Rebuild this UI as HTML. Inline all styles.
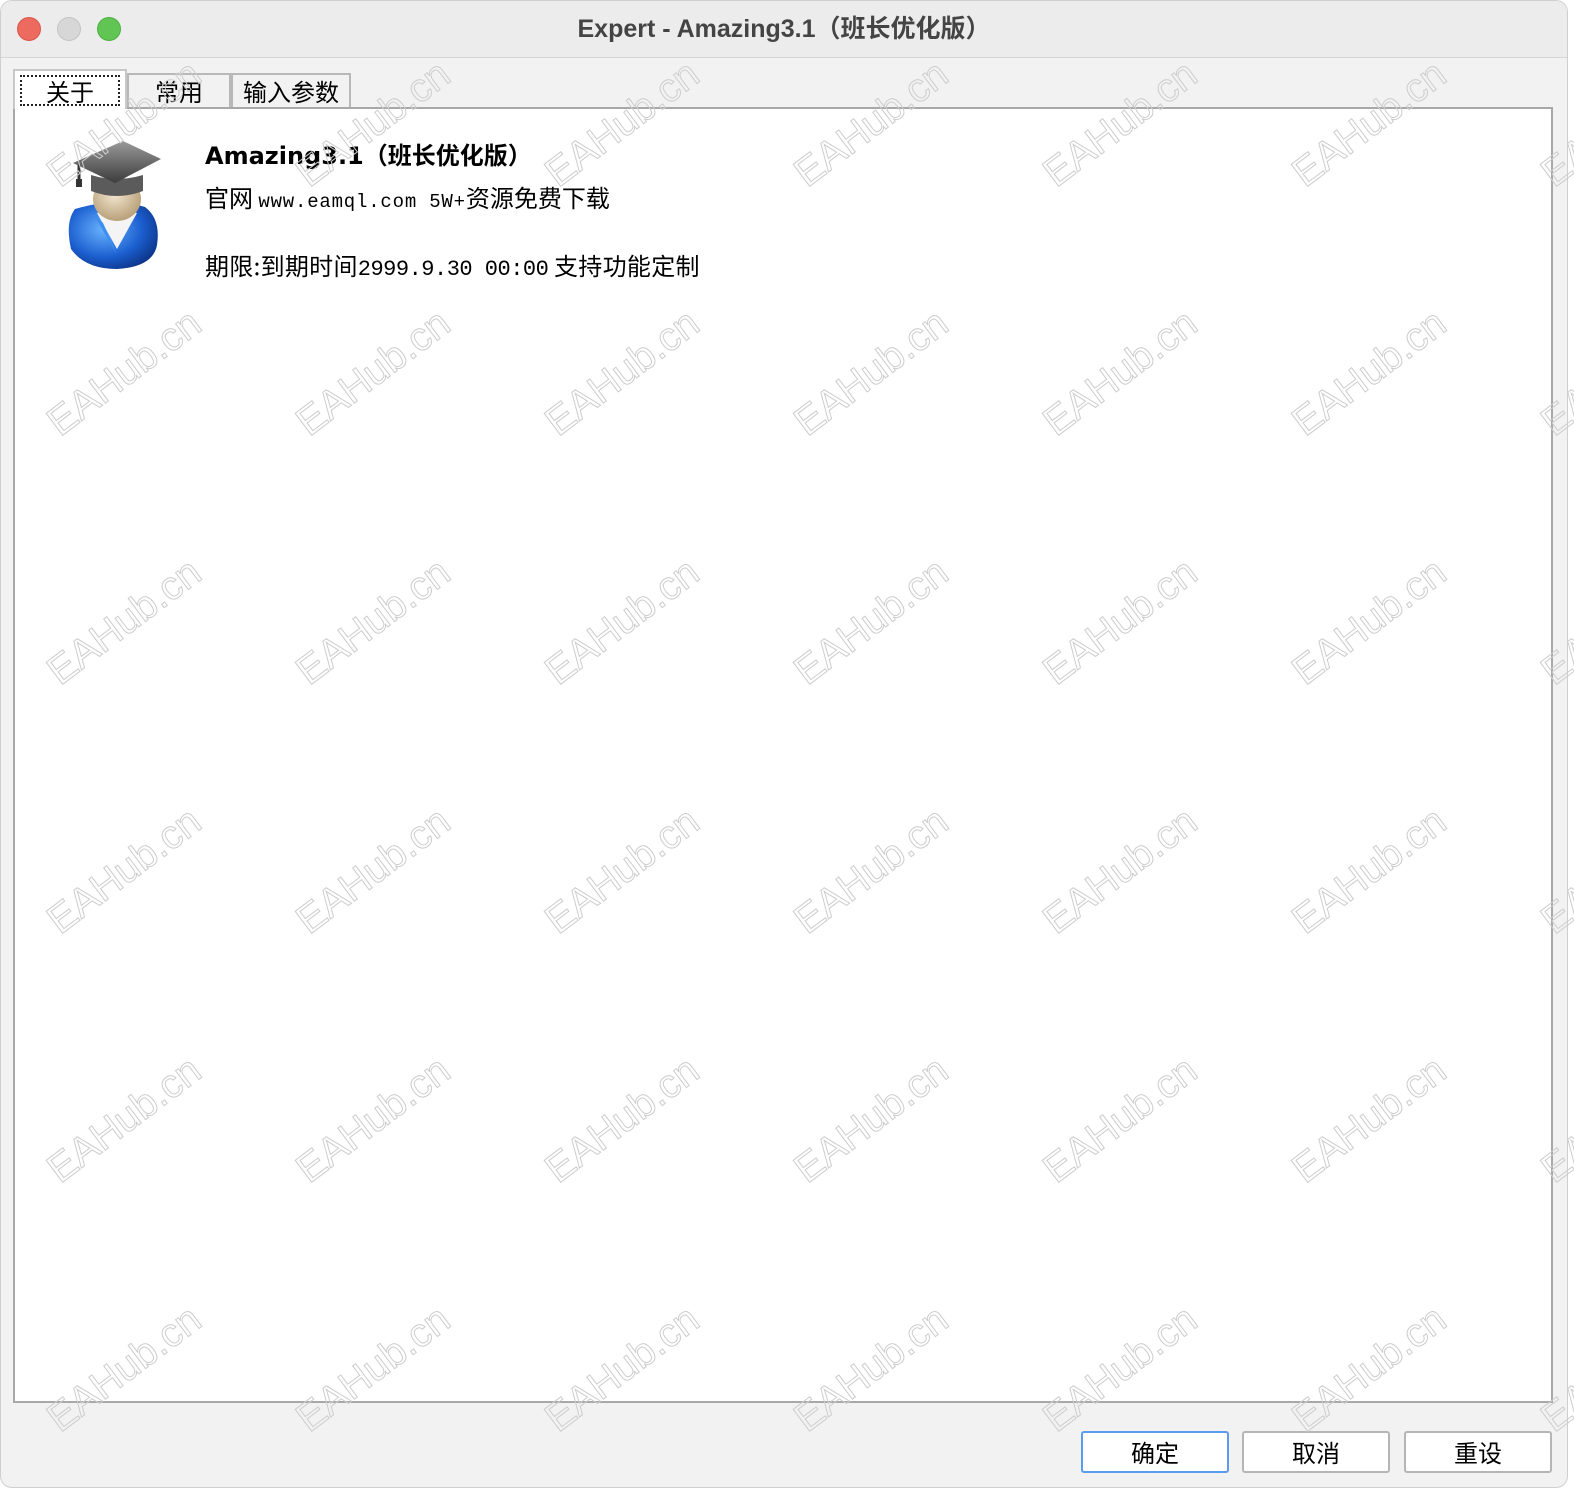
<!DOCTYPE html>
<html><head><meta charset="utf-8">
<style>
html,body{margin:0;padding:0;}
body{width:1574px;height:1494px;background:#fff;position:relative;overflow:hidden;font-family:"Liberation Sans","Noto Sans CJK SC",sans-serif;}
.win{position:absolute;left:0;top:0;width:1568px;height:1488px;background:#f2f2f2;border-radius:12px;border:1px solid #cfcfcf;box-sizing:border-box;overflow:hidden;}
.titlebar{position:absolute;left:0;top:0;right:0;height:56px;background:#ececec;border-bottom:1px solid #d6d6d6;}
.dot{position:absolute;top:16px;width:24px;height:24px;border-radius:50%;}
.title{position:absolute;left:0;right:0;top:8px;text-align:center;font-size:25px;font-weight:bold;color:#444;}
.tab{position:absolute;top:72px;height:34px;background:#f2f2f2;border:2px solid #b8b8b8;border-bottom:none;box-sizing:border-box;font-family:"WenQuanYi Zen Hei","Noto Sans CJK SC",sans-serif;font-size:24px;text-align:center;line-height:32px;color:#000;}
.panel{position:absolute;left:12px;top:106px;width:1540px;height:1296px;background:#fff;border:2px solid #a8a8a8;box-sizing:border-box;}
.t{position:absolute;white-space:nowrap;color:#000;font-family:"WenQuanYi Zen Hei","Noto Sans CJK SC",sans-serif;}
.btn{position:absolute;top:1430px;width:148px;height:42px;background:#fff;border:2px solid #b5b5b5;border-radius:3px;box-sizing:border-box;text-align:center;line-height:38px;font-size:24px;font-family:"WenQuanYi Zen Hei","Noto Sans CJK SC",sans-serif;}
svg.wm{position:absolute;left:0;top:0;}
</style></head><body>
<div class="win">
 <div class="titlebar">
  <div class="dot" style="left:16px;background:#ed6a5e;border:1px solid #d9564b;box-sizing:border-box"></div>
  <div class="dot" style="left:56px;background:#d7d7d7;border:1px solid #c4c4c4;box-sizing:border-box"></div>
  <div class="dot" style="left:96px;background:#61c554;border:1px solid #4fae44;box-sizing:border-box"></div>
  <div class="title">Expert - Amazing3.1（班长优化版）</div>
 </div>
 <div class="panel"></div>
 <div class="tab" style="left:12px;top:68px;width:114px;height:40px;background:#fff;border-color:#c8c8c8;z-index:2"><div style="position:absolute;left:5px;top:4px;right:5px;bottom:3px;border:2px dotted #222;line-height:28px">关于</div></div>
 <div class="tab" style="left:126px;width:104px;">常用</div>
 <div class="tab" style="left:230px;width:120px;">输入参数</div>

 <svg style="position:absolute;left:44px;top:136px" width="120" height="136" viewBox="0 0 120 136">
  <defs>
   <radialGradient id="bl" cx="40%" cy="40%" r="70%"><stop offset="0" stop-color="#6ab4ff"/><stop offset="0.6" stop-color="#1c5fd0"/><stop offset="1" stop-color="#0a2f80"/></radialGradient>
   <linearGradient id="cap" x1="0" y1="0" x2="0" y2="1"><stop offset="0" stop-color="#9a9a9a"/><stop offset="1" stop-color="#3c3c3c"/></linearGradient>
   <radialGradient id="face" cx="45%" cy="40%" r="60%"><stop offset="0" stop-color="#f3e6cf"/><stop offset="1" stop-color="#b8a07a"/></radialGradient>
  </defs>
  <path d="M30 72 Q20 85 26 112 Q40 132 72 132 Q108 130 112 108 Q116 82 100 70 Q70 60 30 72Z" fill="url(#bl)"/>
  <path d="M52 76 L72 112 L92 76 Q72 70 52 76Z" fill="#f4f4f4"/>
  <path d="M48 76 L72 118 L58 86Z" fill="#3d8ef0"/>
  <ellipse cx="72" cy="62" rx="24" ry="22" fill="url(#face)"/>
  <path d="M46 54 Q72 64 98 54 L98 38 Q72 46 46 38Z" fill="#5b5b5b"/>
  <path d="M28 26 L78 4 L116 22 L70 46Z" fill="url(#cap)"/>
  <path d="M34 28 L34 44" stroke="#333" stroke-width="3"/>
  <rect x="31" y="42" width="6" height="8" fill="#333"/>
 </svg>

 <div class="t" style="left:204px;top:135px;font-family:'DejaVu Sans','Noto Sans CJK SC',sans-serif;font-size:24px;font-weight:bold;letter-spacing:0px">Amazing3.1（班长优化版）</div>
 <div class="t" style="left:204px;top:178px;font-size:24px">官网 <span style="font-family:'Liberation Mono',monospace;font-size:19px;letter-spacing:0.8px">www.eamql.com 5W+</span>资源免费下载</div>
 <div class="t" style="left:204px;top:246px;font-size:24px;letter-spacing:0.3px">期限:到期时间<span style="font-family:'Liberation Mono',monospace;font-size:22px;letter-spacing:-0.5px">2999.9.30 00:00</span> 支持功能定制</div>

 <div class="btn" style="left:1080px;border-color:#5b9bf0">确定</div>
 <div class="btn" style="left:1241px">取消</div>
 <div class="btn" style="left:1403px">重设</div>
</div>

<svg class="wm" width="1574" height="1494" font-family="Liberation Sans, sans-serif" font-size="40" fill="none" stroke="#cdcdcd" stroke-width="1" text-anchor="middle">
 <g id="row">
  <text transform="translate(132,134) rotate(-37)">EAHub.cn</text>
  <text transform="translate(381,134) rotate(-37)">EAHub.cn</text>
  <text transform="translate(630,134) rotate(-37)">EAHub.cn</text>
  <text transform="translate(879,134) rotate(-37)">EAHub.cn</text>
  <text transform="translate(1128,134) rotate(-37)">EAHub.cn</text>
  <text transform="translate(1377,134) rotate(-37)">EAHub.cn</text>
  <text transform="translate(1626,134) rotate(-37)">EAHub.cn</text>
 </g>
 <use href="#row" y="249"/>
 <use href="#row" y="498"/>
 <use href="#row" y="747"/>
 <use href="#row" y="996"/>
 <use href="#row" y="1245"/>
</svg>
</body></html>
